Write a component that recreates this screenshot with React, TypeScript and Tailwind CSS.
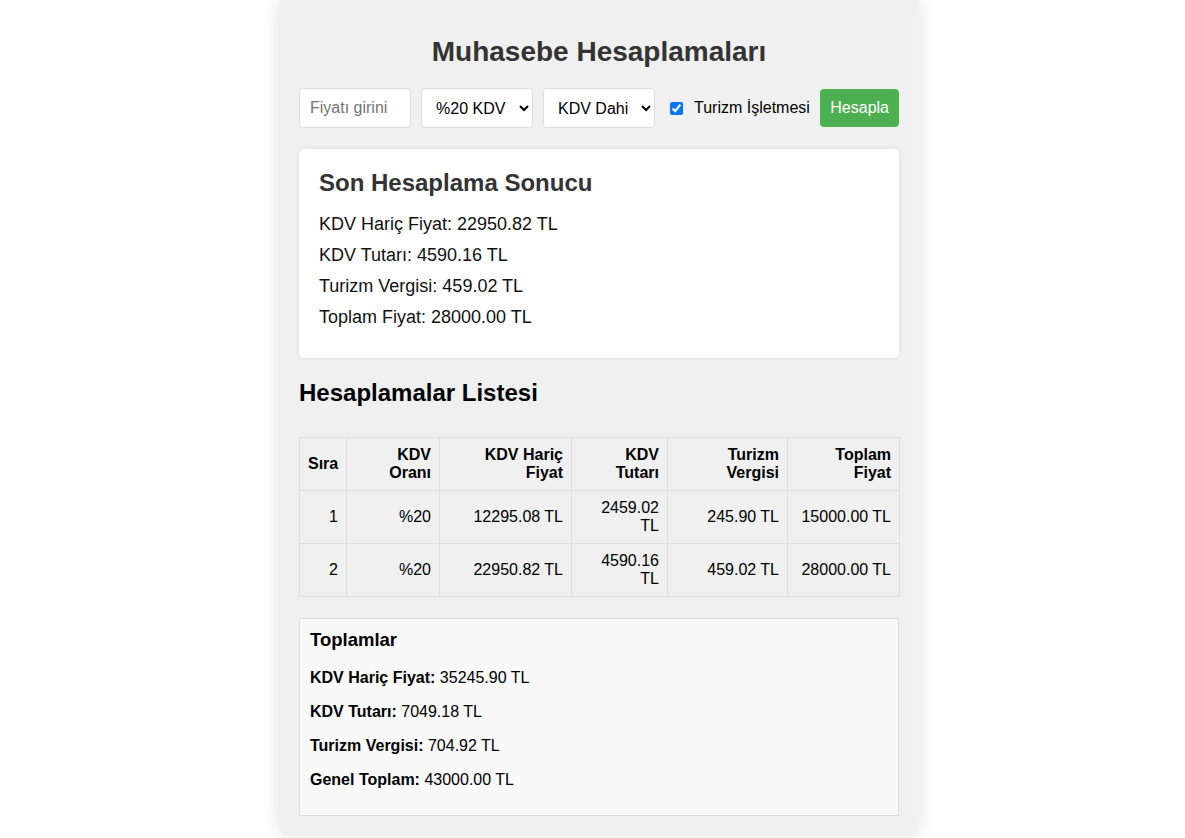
const rows = [
  { no: 1, rate: "%20", net: "12295.08 TL", vat: "2459.02 TL", tour: "245.90 TL", total: "15000.00 TL" },
  { no: 2, rate: "%20", net: "22950.82 TL", vat: "4590.16 TL", tour: "459.02 TL", total: "28000.00 TL" },
];

const totals = [
  { label: "KDV Hariç Fiyat:", value: "35245.90 TL" },
  { label: "KDV Tutarı:", value: "7049.18 TL" },
  { label: "Turizm Vergisi:", value: "704.92 TL" },
  { label: "Genel Toplam:", value: "43000.00 TL" },
];

export default function App() {
  return (
    <div className="flex min-h-screen justify-center bg-white pl-[13px] font-['Liberation_Sans',Arial,sans-serif] text-black">
      <div className="w-[640px] self-start rounded-b-[10px] bg-[#f0f0f0] p-5 shadow-[0_0_20px_rgba(0,0,0,0.12)]">
        {/* Title */}
        <h1 className="mt-4 text-center text-[28px] font-bold leading-8 text-[#333]">
          Muhasebe Hesaplamaları
        </h1>

        {/* Form */}
        <div className="mt-5 flex items-center gap-[10px]">
          <input
            type="text"
            placeholder="Fiyatı giriniz"
            className="h-10 w-[112px] shrink-0 rounded border border-[#ddd] bg-white pl-[10px] pr-[22px] text-base placeholder:text-[#757575]"
          />
          <select className="h-10 w-[112px] shrink-0 rounded border border-[#ddd] bg-white px-[10px] text-base">
            <option>%20 KDV</option>
            <option>%10 KDV</option>
            <option>%1 KDV</option>
          </select>
          <select className="h-10 w-[112px] shrink-0 rounded border border-[#ddd] bg-white px-[10px] text-base">
            <option>KDV Dahil</option>
            <option>KDV Hariç</option>
          </select>
          <label className="flex shrink-0 items-center gap-[11px] whitespace-nowrap pl-[5px] text-base">
            <input type="checkbox" defaultChecked className="h-[13px] w-[13px] accent-[#0075ff]" />
            Turizm İşletmesi
          </label>
          <button className="ml-auto h-[38px] shrink-0 rounded bg-[#4caf50] px-[10px] text-base text-white">
            Hesapla
          </button>
        </div>

        {/* Last result */}
        <div className="mt-[21px] rounded-[5px] bg-white p-5 shadow-[0_0_5px_rgba(0,0,0,0.08)]">
          <h3 className="text-2xl font-bold leading-7 text-[#333]">Son Hesaplama Sonucu</h3>
          <div className="mt-[17px] text-lg leading-[21px] text-[#111]">
            <p className="mb-[10px]">KDV Hariç Fiyat: 22950.82 TL</p>
            <p className="mb-[10px]">KDV Tutarı: 4590.16 TL</p>
            <p className="mb-[10px]">Turizm Vergisi: 459.02 TL</p>
            <p className="mb-[10px]">Toplam Fiyat: 28000.00 TL</p>
          </div>
        </div>

        {/* List */}
        <h2 className="mt-[21px] text-2xl font-bold leading-7">Hesaplamalar Listesi</h2>

        <table className="mt-[30px] w-[600px] table-fixed border-collapse text-base leading-[18px]">
          <colgroup>
            <col className="w-[47px]" />
            <col className="w-[93px]" />
            <col className="w-[132px]" />
            <col className="w-[96px]" />
            <col className="w-[120px]" />
            <col className="w-[112px]" />
          </colgroup>
          <thead>
            <tr className="font-bold">
              <th className="border border-[#ddd] p-2 text-right">Sıra</th>
              <th className="border border-[#ddd] p-2 text-right">KDV Oranı</th>
              <th className="border border-[#ddd] p-2 text-right">KDV Hariç Fiyat</th>
              <th className="border border-[#ddd] p-2 text-right">KDV Tutarı</th>
              <th className="border border-[#ddd] p-2 text-right">Turizm Vergisi</th>
              <th className="border border-[#ddd] p-2 text-right">Toplam Fiyat</th>
            </tr>
          </thead>
          <tbody>
            {rows.map((r) => (
              <tr key={r.no} className="h-[53px]">
                <td className="border border-[#ddd] p-2 text-right">{r.no}</td>
                <td className="border border-[#ddd] p-2 text-right">{r.rate}</td>
                <td className="border border-[#ddd] p-2 text-right">{r.net}</td>
                <td className="border border-[#ddd] p-2 text-right">{r.vat}</td>
                <td className="border border-[#ddd] p-2 text-right">{r.tour}</td>
                <td className="border border-[#ddd] p-2 text-right">{r.total}</td>
              </tr>
            ))}
          </tbody>
        </table>

        {/* Totals */}
        <div className="mt-[21px] border border-[#ddd] bg-[#f9f9f9] p-[10px]">
          <h3 className="text-[18.5px] font-bold leading-[21px]">Toplamlar</h3>
          <div className="mt-[19px] text-base leading-[18px]">
            {totals.map((t) => (
              <p key={t.label} className="mb-4">
                <strong>{t.label}</strong> {t.value}
              </p>
            ))}
          </div>
        </div>
      </div>
    </div>
  );
}
